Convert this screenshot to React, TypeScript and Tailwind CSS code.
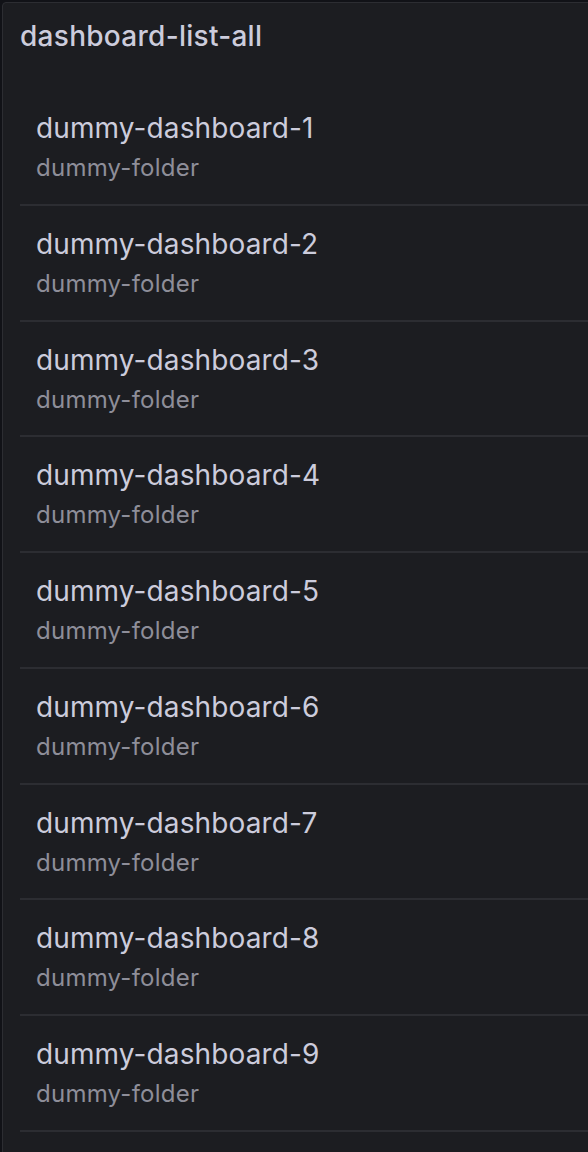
import React from "react";

const items = Array.from({ length: 10 }, (_, i) => `dummy-dashboard-${i + 1}`);

export default function App() {
  return (
    <div
      className="h-[1152px] w-[588px] overflow-hidden bg-[#111217] pl-[2px] pt-[2px]"
      style={{ fontFamily: "Inter, 'Noto Sans', sans-serif" }}
    >
      <div className="h-[1200px] w-[620px] rounded-[4px] border border-[#2c2d32] bg-[#1c1d21]">
        <div className="flex h-[66px] items-center pl-[17px] text-[28px] font-medium tracking-[0.28px] text-[#ccccdc]">
          dashboard-list-all
        </div>
        <div className="pl-[17px] pt-[21px]">
          {items.map((name) => (
            <div key={name} className="border-b-2 border-[#2c2d32]">
              <div className="flex h-[113.75px] flex-col pl-[16px] pt-[18px]">
                <div className="text-[28px] leading-[40px] tracking-[0.12px] text-[#ccccdc]">{name}</div>
                <div className="text-[24px] leading-[40px] tracking-[0.25px] text-[#8e8e99]">dummy-folder</div>
              </div>
            </div>
          ))}
        </div>
      </div>
    </div>
  );
}
